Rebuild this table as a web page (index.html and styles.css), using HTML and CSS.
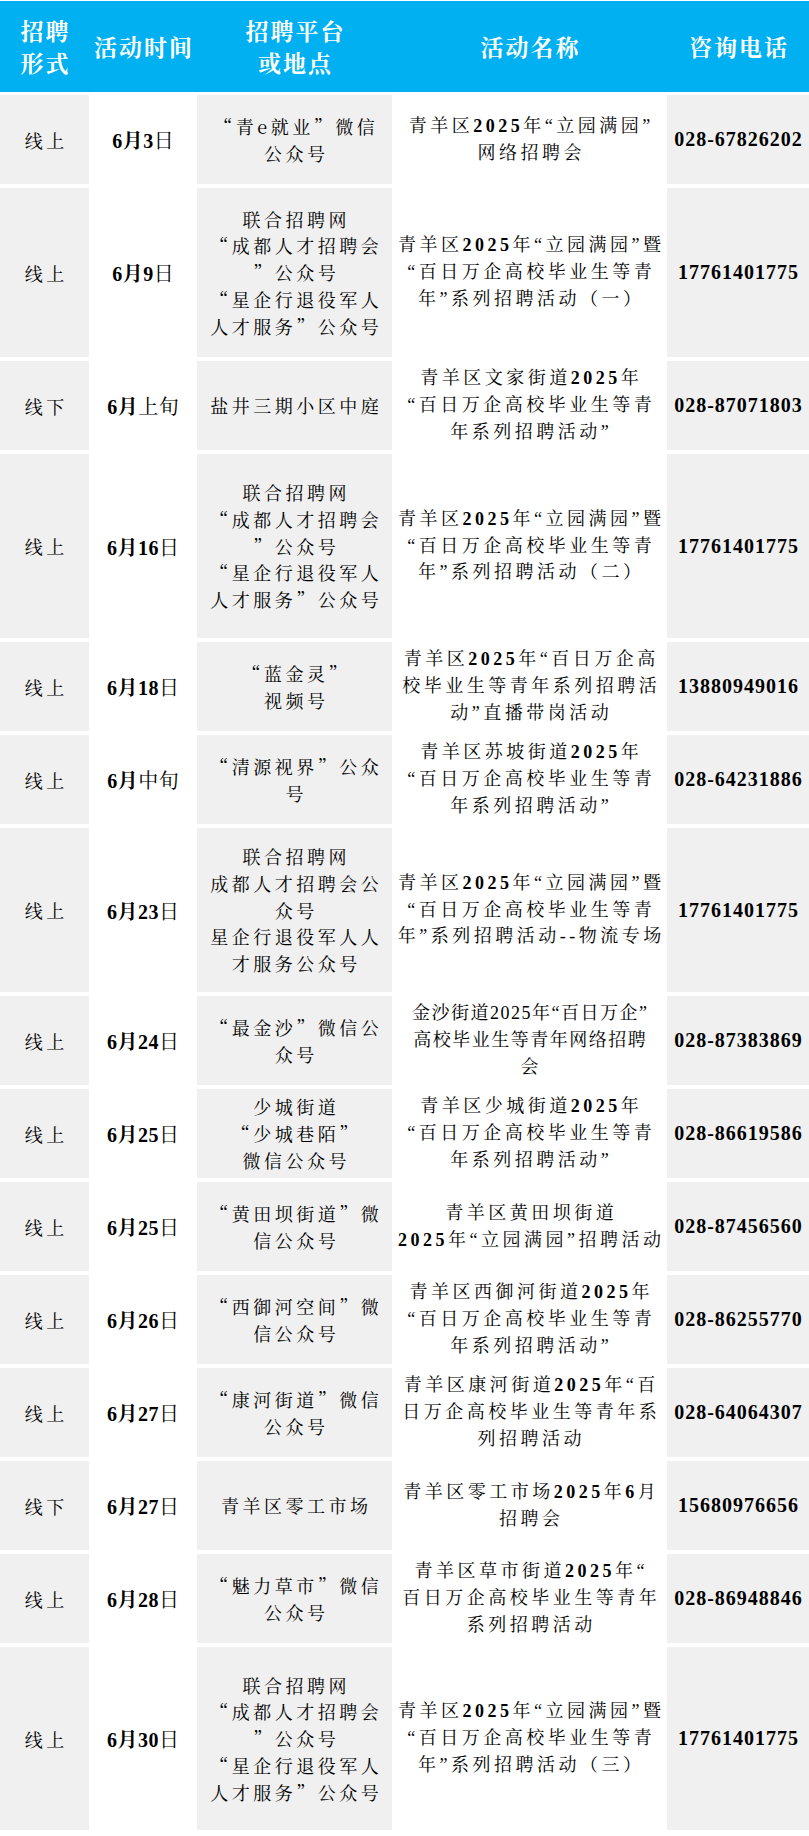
FILE: index.html
```html
<!DOCTYPE html>
<html lang="zh-CN">
<head>
<meta charset="utf-8">
<title>招聘活动</title>
<link rel="stylesheet" href="styles.css">
</head>
<body>
<div class="sheet">
  <div class="row head">
    <div class="c h">招聘<br>形式</div>
    <div class="c h">活动时间</div>
    <div class="c h">招聘平台<br>或地点</div>
    <div class="c h">活动名称</div>
    <div class="c h">咨询电话</div>
  </div>

  <div class="row r-s">
    <div class="c k1 gray">线上</div>
    <div class="c k2"><p><b>6月3</b>日</p></div>
    <div class="c k3 gray">“青e就业”微信<br>公众号</div>
    <div class="c k4"><p>青羊区<b>2025</b>年“立园满园”<br>网络招聘会</p></div>
    <div class="c k5 gray">028-67826202</div>
  </div>

  <div class="row r-l">
    <div class="c k1 gray">线上</div>
    <div class="c k2"><p><b>6月9</b>日</p></div>
    <div class="c k3 gray">联合招聘网<br>“成都人才招聘会<br>”公众号<br>“星企行退役军人<br>人才服务”公众号</div>
    <div class="c k4"><p>青羊区<b>2025</b>年“立园满园”暨<br>“百日万企高校毕业生等青<br>年”系列招聘活动（一）</p></div>
    <div class="c k5 gray">17761401775</div>
  </div>

  <div class="row r-s">
    <div class="c k1 gray">线下</div>
    <div class="c k2"><p><b>6月</b>上旬</p></div>
    <div class="c k3 gray">盐井三期小区中庭</div>
    <div class="c k4"><p>青羊区文家街道<b>2025</b>年<br>“百日万企高校毕业生等青<br>年系列招聘活动”</p></div>
    <div class="c k5 gray">028-87071803</div>
  </div>

  <div class="row r-xl">
    <div class="c k1 gray">线上</div>
    <div class="c k2"><p><b>6月16</b>日</p></div>
    <div class="c k3 gray">联合招聘网<br>“成都人才招聘会<br>”公众号<br>“星企行退役军人<br>人才服务”公众号</div>
    <div class="c k4"><p>青羊区<b>2025</b>年“立园满园”暨<br>“百日万企高校毕业生等青<br>年”系列招聘活动（二）</p></div>
    <div class="c k5 gray">17761401775</div>
  </div>

  <div class="row r-s">
    <div class="c k1 gray">线上</div>
    <div class="c k2"><p><b>6月18</b>日</p></div>
    <div class="c k3 gray">“蓝金灵”<br>视频号</div>
    <div class="c k4"><p>青羊区<b>2025</b>年“百日万企高<br>校毕业生等青年系列招聘活<br>动”直播带岗活动</p></div>
    <div class="c k5 gray">13880949016</div>
  </div>

  <div class="row r-s">
    <div class="c k1 gray">线上</div>
    <div class="c k2"><p><b>6月</b>中旬</p></div>
    <div class="c k3 gray">“清源视界”公众<br>号</div>
    <div class="c k4"><p>青羊区苏坡街道<b>2025</b>年<br>“百日万企高校毕业生等青<br>年系列招聘活动”</p></div>
    <div class="c k5 gray">028-64231886</div>
  </div>

  <div class="row r-m">
    <div class="c k1 gray">线上</div>
    <div class="c k2"><p><b>6月23</b>日</p></div>
    <div class="c k3 gray">联合招聘网<br>成都人才招聘会公<br>众号<br>星企行退役军人人<br>才服务公众号</div>
    <div class="c k4"><p>青羊区<b>2025</b>年“立园满园”暨<br>“百日万企高校毕业生等青<br>年”系列招聘活动--物流专场</p></div>
    <div class="c k5 gray">17761401775</div>
  </div>

  <div class="row r-s">
    <div class="c k1 gray">线上</div>
    <div class="c k2"><p><b>6月24</b>日</p></div>
    <div class="c k3 gray">“最金沙”微信公<br>众号</div>
    <div class="c k4 tight"><p>金沙街道2025年“百日万企”<br>高校毕业生等青年网络招聘<br>会</p></div>
    <div class="c k5 gray">028-87383869</div>
  </div>

  <div class="row r-s">
    <div class="c k1 gray">线上</div>
    <div class="c k2"><p><b>6月25</b>日</p></div>
    <div class="c k3 gray">少城街道<br>“少城巷陌”<br>微信公众号</div>
    <div class="c k4"><p>青羊区少城街道<b>2025</b>年<br>“百日万企高校毕业生等青<br>年系列招聘活动”</p></div>
    <div class="c k5 gray">028-86619586</div>
  </div>

  <div class="row r-s">
    <div class="c k1 gray">线上</div>
    <div class="c k2"><p><b>6月25</b>日</p></div>
    <div class="c k3 gray">“黄田坝街道”微<br>信公众号</div>
    <div class="c k4"><p>青羊区黄田坝街道<br><b>2025</b>年“立园满园”招聘活动</p></div>
    <div class="c k5 gray">028-87456560</div>
  </div>

  <div class="row r-s">
    <div class="c k1 gray">线上</div>
    <div class="c k2"><p><b>6月26</b>日</p></div>
    <div class="c k3 gray">“西御河空间”微<br>信公众号</div>
    <div class="c k4"><p>青羊区西御河街道<b>2025</b>年<br>“百日万企高校毕业生等青<br>年系列招聘活动”</p></div>
    <div class="c k5 gray">028-86255770</div>
  </div>

  <div class="row r-s">
    <div class="c k1 gray">线上</div>
    <div class="c k2"><p><b>6月27</b>日</p></div>
    <div class="c k3 gray">“康河街道”微信<br>公众号</div>
    <div class="c k4"><p>青羊区康河街道<b>2025</b>年“百<br>日万企高校毕业生等青年系<br>列招聘活动</p></div>
    <div class="c k5 gray">028-64064307</div>
  </div>

  <div class="row r-s">
    <div class="c k1 gray">线下</div>
    <div class="c k2"><p><b>6月27</b>日</p></div>
    <div class="c k3 gray">青羊区零工市场</div>
    <div class="c k4"><p>青羊区零工市场<b>2025</b>年<b>6</b>月<br>招聘会</p></div>
    <div class="c k5 gray">15680976656</div>
  </div>

  <div class="row r-s">
    <div class="c k1 gray">线上</div>
    <div class="c k2"><p><b>6月28</b>日</p></div>
    <div class="c k3 gray">“魅力草市”微信<br>公众号</div>
    <div class="c k4"><p>青羊区草市街道<b>2025</b>年“<br>百日万企高校毕业生等青年<br>系列招聘活动</p></div>
    <div class="c k5 gray">028-86948846</div>
  </div>

  <div class="row r-xl2">
    <div class="c k1 gray">线上</div>
    <div class="c k2"><p><b>6月30</b>日</p></div>
    <div class="c k3 gray">联合招聘网<br>“成都人才招聘会<br>”公众号<br>“星企行退役军人<br>人才服务”公众号</div>
    <div class="c k4"><p>青羊区<b>2025</b>年“立园满园”暨<br>“百日万企高校毕业生等青<br>年”系列招聘活动（三）</p></div>
    <div class="c k5 gray">17761401775</div>
  </div>
</div>
</body>
</html>
```

FILE: styles.css
```css
html, body {
  margin: 0;
  padding: 0;
  background: #ffffff;
}

body {
  width: 809px;
  color: #000000;
  font-family: "Noto Serif CJK SC", "Noto Sans CJK SC", serif;
}

.sheet {
  display: flex;
  flex-direction: column;
  gap: 4px;
  padding-top: 1px;
}

.row {
  display: grid;
  grid-template-columns: 89px 100px 195px 267px 142px;
  column-gap: 4px;
  height: 89px;
}

.head {
  height: 91px;
  margin-bottom: -1px;
  background: #00b0f0;
}

.r-l { height: 169px; }
.r-xl { height: 184px; }
.r-m { height: 164px; }
.r-xl2 { height: 183px; }

.c {
  display: flex;
  align-items: center;
  justify-content: center;
  text-align: center;
  white-space: nowrap;
}

.c p {
  margin: 0;
}

.gray {
  background: #f0f0f0;
}

.h {
  color: #ffffff;
  font-family: "Noto Serif CJK SC", "Noto Sans CJK SC", sans-serif;
  font-weight: 700;
  font-size: 23px;
  line-height: 32px;
  letter-spacing: 2px;
  padding-left: 2px;
}

.k1 {
  font-size: 18px;
  letter-spacing: 3.5px;
  padding-left: 3.5px;
}

.k2 {
  font-family: "Liberation Serif", "Noto Serif CJK SC", "Noto Sans CJK SC", serif;
  font-size: 20px;
  letter-spacing: 0.5px;
  padding-left: 0.5px;
}

.k2 b,
.k4 b {
  font-weight: 700;
}

.k3 {
  font-size: 18px;
  line-height: 26.7px;
  letter-spacing: 3.5px;
  padding-left: 3.5px;
}

.k4 {
  font-family: "Liberation Serif", "Noto Serif CJK SC", "Noto Sans CJK SC", serif;
  font-size: 18px;
  line-height: 26.7px;
  letter-spacing: 3.5px;
  padding-left: 3.5px;
}

.k4.tight {
  letter-spacing: 1.5px;
  padding-left: 1.5px;
}

.k5 {
  font-family: "Liberation Serif", serif;
  font-weight: 700;
  font-size: 20px;
  letter-spacing: 1px;
  padding-left: 1px;
}
```
